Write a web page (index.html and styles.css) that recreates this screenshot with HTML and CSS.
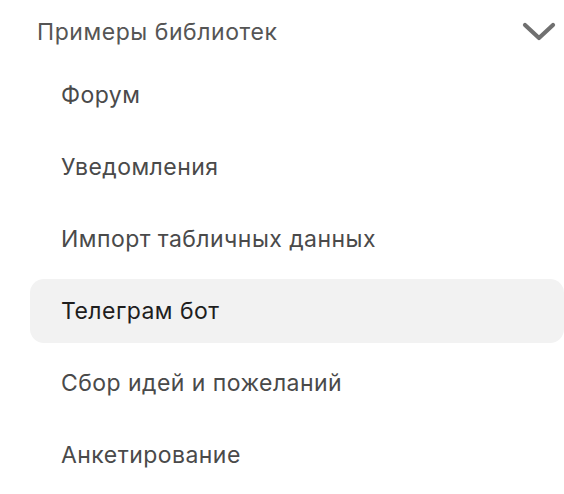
FILE: index.html
```html
<!DOCTYPE html>
<html lang="ru">
<head>
    <meta charset="UTF-8">
    <meta name="viewport" content="width=device-width, initial-scale=1.0">
    <title>Примеры библиотек</title>
    <link rel="stylesheet" href="styles.css">
</head>
<body>
    <div class="menu">
        <div class="menu-header">
            <span class="menu-title">Примеры библиотек</span>
            <svg class="chevron" width="34" height="22" viewBox="0 0 34 22">
                <polyline points="3,4 17,17 31,4" fill="none" stroke="#707070" stroke-width="4.2" stroke-linecap="round" stroke-linejoin="round"/>
            </svg>
        </div>
        <ul class="menu-list">
            <li class="menu-item">Форум</li>
            <li class="menu-item">Уведомления</li>
            <li class="menu-item">Импорт табличных данных</li>
            <li class="menu-item active">Телеграм бот</li>
            <li class="menu-item">Сбор идей и пожеланий</li>
            <li class="menu-item">Анкетирование</li>
        </ul>
    </div>
</body>
</html>
```

FILE: styles.css
```css
body {
    margin: 0;
    padding: 0;
    background: #ffffff;
    font-family: Inter, "Noto Sans", sans-serif;
    overflow: hidden;
}

.menu {
    padding: 8px 0 0 30px;
}

.menu-header {
    display: flex;
    justify-content: space-between;
    align-items: center;
    height: 48px;
    padding-left: 7px;
    padding-right: 8px;
}

.menu-title {
    font-size: 23px;
    color: #555555;
    letter-spacing: 0.55px;
}

.chevron {
    display: block;
}

.menu-list {
    list-style: none;
    margin: 7px 0 0;
    padding: 0;
    display: flex;
    flex-direction: column;
    gap: 8px;
}

.menu-item {
    height: 64px;
    display: flex;
    align-items: center;
    padding-left: 31px;
    font-size: 23px;
    color: #4a4a4a;
    border-radius: 14px;
    letter-spacing: 0.45px;
}

.menu-item.active {
    background: #f2f2f2;
    color: #1e1e1e;
}
```
